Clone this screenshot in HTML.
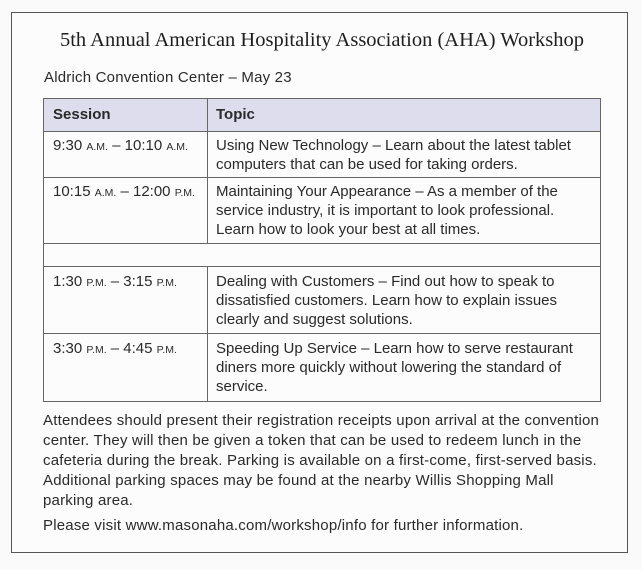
<!DOCTYPE html>
<html><head><style>
*{margin:0;padding:0;box-sizing:border-box}
body{width:642px;height:570px;background:#fafafa;position:relative;overflow:hidden;font-family:"Liberation Sans",sans-serif;color:#2a2a2a}
.box{position:absolute;left:11px;top:12px;width:617px;height:541px;border:1.5px solid #555;background:#fcfcfc}
.title{position:absolute;left:0;width:644px;top:29px;text-align:center;font-family:"Liberation Serif",serif;font-size:20.5px;color:#1e1e1e}
.sub{position:absolute;left:44px;top:69px;font-size:15px;letter-spacing:0.2px}
.t{position:absolute;font-size:15px;line-height:19px;letter-spacing:0;white-space:nowrap}
.sc{font-size:10.5px}
.hl{position:absolute;background:#666;height:1px}
.vl{position:absolute;background:#666;width:1px}
p.para{position:absolute;left:43px;width:590px;font-size:15px;line-height:20px;letter-spacing:0.2px;white-space:nowrap}
</style></head><body>
<div class="box"></div>
<div class="title">5th Annual American Hospitality Association (AHA) Workshop</div>
<div class="sub">Aldrich Convention Center – May 23</div>
<div style="position:absolute;left:43px;top:98px;width:557px;height:34px;background:#dedded"></div>
<div class="hl" style="left:43px;top:98px;width:558px"></div>
<div class="hl" style="left:43px;top:131px;width:558px"></div>
<div class="hl" style="left:43px;top:177px;width:558px"></div>
<div class="hl" style="left:43px;top:243px;width:558px"></div>
<div class="hl" style="left:43px;top:266px;width:558px"></div>
<div class="hl" style="left:43px;top:333px;width:558px"></div>
<div class="hl" style="left:43px;top:401px;width:558px"></div>
<div class="vl" style="left:43px;top:98px;height:304px"></div>
<div class="vl" style="left:600px;top:98px;height:304px"></div>
<div class="vl" style="left:207px;top:98px;height:146px"></div>
<div class="vl" style="left:207px;top:266px;height:136px"></div>
<div class="t" style="left:53px;top:105px;font-weight:bold">Session</div>
<div class="t" style="left:216px;top:105px;font-weight:bold">Topic</div>
<div class="t" style="left:53px;top:136px">9:30 <span class="sc">A.M.</span> – 10:10 <span class="sc">A.M.</span></div>
<div class="t" style="left:216px;top:136px">Using New Technology – Learn about the latest tablet<br>computers that can be used for taking orders.</div>
<div class="t" style="left:53px;top:182px">10:15 <span class="sc">A.M.</span> – 12:00 <span class="sc">P.M.</span></div>
<div class="t" style="left:216px;top:182px">Maintaining Your Appearance – As a member of the<br>service industry, it is important to look professional.<br>Learn how to look your best at all times.</div>
<div class="t" style="left:53px;top:272px">1:30 <span class="sc">P.M.</span> – 3:15 <span class="sc">P.M.</span></div>
<div class="t" style="left:216px;top:272px">Dealing with Customers – Find out how to speak to<br>dissatisfied customers. Learn how to explain issues<br>clearly and suggest solutions.</div>
<div class="t" style="left:53px;top:339px">3:30 <span class="sc">P.M.</span> – 4:45 <span class="sc">P.M.</span></div>
<div class="t" style="left:216px;top:339px">Speeding Up Service – Learn how to serve restaurant<br>diners more quickly without lowering the standard of<br>service.</div>
<p class="para" style="top:411px">Attendees should present their registration receipts upon arrival at the convention<br>center. They will then be given a token that can be used to redeem lunch in the<br>cafeteria during the break. Parking is available on a first-come, first-served basis.<br>Additional parking spaces may be found at the nearby Willis Shopping Mall<br>parking area.</p>
<p class="para" style="top:516px">Please visit www.masonaha.com/workshop/info for further information.</p>
</body></html>
